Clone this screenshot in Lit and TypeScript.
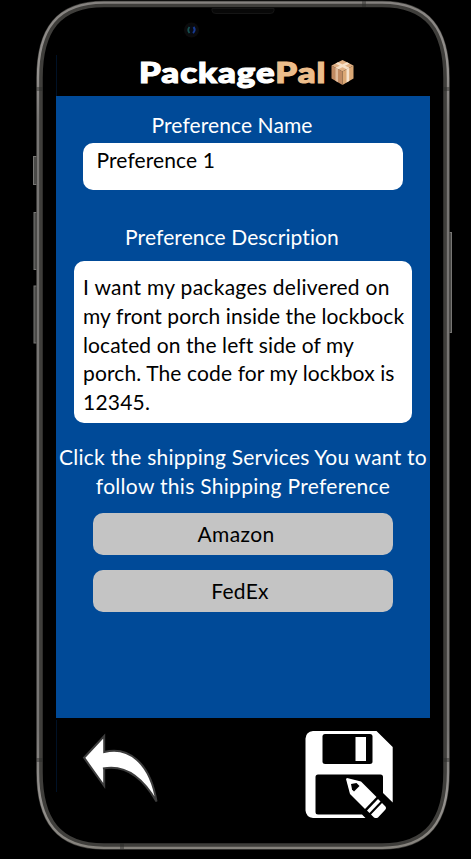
import { LitElement, html, svg, css } from "lit";
import { customElement, state } from "lit/decorators.js";
import { styleMap } from "lit/directives/style-map.js";

const FRAME =
  "M104 4 H382 C428 4 446.5 30 446.5 78 V772 C446.5 820 428 846.5 382 846.5 H104 C58 846.5 39.5 820 39.5 772 V78 C39.5 30 58 4 104 4 Z";

@customElement("phone-frame")
class PhoneFrame extends LitElement {
  static styles = css`
    :host { display: block; }
    svg { display: block; }
  `;
  render() {
    return html`<svg width="471" height="859" viewBox="0 0 471 859" fill="none">
      <defs>
        <linearGradient id="edge" x1="0" y1="0" x2="0" y2="1">
          <stop offset="0" stop-color="#85827f" />
          <stop offset=".08" stop-color="#969390" />
          <stop offset=".14" stop-color="#777573" />
          <stop offset=".86" stop-color="#777573" />
          <stop offset=".94" stop-color="#969390" />
          <stop offset="1" stop-color="#85827c" />
        </linearGradient>
      </defs>
      <g fill="#4a4a48" stroke="#777674">
        <rect x="33.5" y="156.500" width="4" height="28" />
        <rect x="34" y="212.500" width="4" height="57" />
        <rect x="34" y="286" width="4" height="57" />
        <rect x="448" y="232.500" width="3.500" height="100" />
      </g>
      <path d=${FRAME} stroke="#3f3e3b" stroke-width="6.500" />
      <path
        d="M104 2.700 H382 C429 2.700 448 29 448 78 V772 C448 821 429 847.800 382 847.800 H104 C57 847.800 38 821 38 772 V78 C38 29 57 2.700 104 2.700 Z"
        stroke="url(#edge)" stroke-width="2.300" />
      <g fill="#2b2b29" fill-opacity=".45">
        <rect x="36" y="87" width="7" height="4" /><rect x="443" y="87" width="7" height="4" />
        <rect x="36" y="758" width="7" height="4" /><rect x="443" y="758" width="7" height="4" />
        <rect x="362" y="1" width="4" height="6" /><rect x="120" y="843" width="4" height="6" />
      </g>
      <path d="M212 8.500 H274 V10.500 Q274 13.500 270 13.500 H216 Q212 13.500 212 10.500 Z" fill="#080808" stroke="#151515" />
      <circle cx="191.500" cy="30" r="7.500" fill="#0b0b0c" />
      <circle cx="191.500" cy="30" r="4.500" fill="#080b14" />
      <path d="M189.500 27 Q187 30 189.500 33" stroke="#17514f" stroke-width="1.800" />
      <path d="M193.500 27 Q196 30 193 33" stroke="#183a91" stroke-width="2" />
      <path d="M56.500 55 V96 M56.500 720 V792" stroke="#001126" />
    </svg>`;
  }
}

const parcel = svg`
  <path d="M1 6.500 L12 12.500 V26 L1 19.500 Z" fill="#c08a62"/>
  <path d="M12 12.500 L23 6.500 V19.500 L12 26 Z" fill="#dba875"/>
  <path d="M12 1 L23 6.500 L12 12.500 L1 6.500 Z" fill="#e0b084"/>
  <path d="M5 4.500 L7.500 3.200 L18.700 8.800 L16 10.300 Z M16.500 3.200 L19 4.500 L8 10.300 L5 8.800 Z" fill="#f6e0c8"/>
  <path d="M5 8.800 L7.500 10.100 V23.200 L5 21.800 Z" fill="#e0bb9b"/>
  <path d="M16 10.300 L18.700 8.800 V22 L16 23.600 Z" fill="#f6e2cc"/>`;

interface Line {
  text: string;
  /** Letter spacing in pixels. */
  track: number;
}

@customElement("app-root")
export class AppRoot extends LitElement {
  @state() private services: Line[] = [
    { text: "Amazon", track: 0.4 },
    { text: "FedEx", track: 0.3 },
  ];

  static styles = css`
    :host {
      display: block;
      position: relative;
      width: 471px;
      height: 859px;
      overflow: hidden;
      background: #000;
      font-family: Lato, "Noto Sans", sans-serif;
      font-size: 21px;
      line-height: 28.8px;
    }
    * { box-sizing: border-box; }
    phone-frame { position: absolute; inset: 0; }
    .screen {
      position: relative;
      display: flex;
      flex-direction: column;
      width: 374px;
      height: 859px;
      margin-left: 56px;
    }
    header {
      display: flex;
      flex: none;
      height: 96px;
      padding: 54px 0 0 83px;
      align-items: flex-start;
    }
    h1 {
      flex: none;
      margin: 0;
      width: 191px;
      font-size: 29px;
      line-height: 36px;
      font-weight: 900;
      letter-spacing: 0.85px;
      white-space: nowrap;
      color: #fff;
      -webkit-text-stroke: 1.2px currentColor;
      transform: scaleX(1.2);
      transform-origin: 0 0;
    }
    h1 span { color: #edbd8b; }
    .parcel { margin-top: 5px; width: 25px; height: 27px; }
    main {
      display: flex;
      flex: none;
      flex-direction: column;
      align-items: center;
      height: 622px;
      padding-top: 15px;
      background: #004a98;
      color: #fff;
    }
    .label { margin-right: 22px; white-space: nowrap; letter-spacing: 0.1px; }
    .name {
      width: 320px;
      height: 47.500px;
      margin: 3px 0 32.700px;
      padding: 3px 13.500px;
      border-radius: 10px;
      background: #fff;
      color: #000;
      letter-spacing: 0.1px;
    }
    .description {
      width: 338px;
      height: 162px;
      margin: 9px 0 20px;
      padding: 12.200px 9px;
      border-radius: 10px;
      background: #fff;
      color: #000;
    }
    .line { white-space: nowrap; }
    .prompt { text-align: center; margin-bottom: 13px; }
    .service {
      display: flex;
      justify-content: center;
      width: 300px;
      height: 42px;
      margin-bottom: 15px;
      padding: 7px 14px 0 0;
      border: 0;
      border-radius: 10px;
      background: #c4c4c4;
      color: #000;
      font: inherit;
    }
    .service + .service { padding-right: 6px; }
    footer {
      display: flex;
      justify-content: space-between;
      padding: 12px 36px 0 26px;
    }
    .back { margin-top: 3px; }
  `;

  private description: Line[] = [
    { text: "I want my packages delivered on", track: 0.28 },
    { text: "my front porch inside the lockbock", track: 0.08 },
    { text: "located on the left side of my", track: 0.1 },
    { text: "porch. The code for my lockbox is", track: 0.12 },
    { text: "12345.", track: 0.2 },
  ];

  private prompt: Line[] = [
    { text: "Click the shipping Services You want to", track: 0.23 },
    { text: "follow this Shipping Preference", track: 0.3 },
  ];

  private line(l: Line) {
    return html`<div class="line" style=${styleMap({ letterSpacing: `${l.track}px` })}>${l.text}</div>`;
  }

  render() {
    return html`
      <phone-frame></phone-frame>
      <div class="screen">
        <header>
          <h1>Package<span>Pal</span></h1>
          <svg class="parcel" viewBox="0 0 24 27">${parcel}</svg>
        </header>
        <main>
          <div class="label">Preference Name</div>
          <div class="name">Preference 1</div>
          <div class="label">Preference Description</div>
          <div class="description">${this.description.map((l) => this.line(l))}</div>
          <div class="prompt">${this.prompt.map((l) => this.line(l))}</div>
          ${this.services.map((s) => html`<button class="service">${this.line(s)}</button>`)}
        </main>
        <footer>
          <svg class="back" width="78" height="72" viewBox="82 733 78 72">
            <path
              d="M84 757.700 L104.200 736 V752 C128 746 150 762 156.500 801.500 C143 778 126 764 103 768.500 H104.200 V786 Z"
              fill="#fff" stroke="#3d3d3d" stroke-width="2" />
          </svg>
          <svg width="90" height="90" viewBox="304 730 90 90">
            <path
              d="M313 731 H376.500 L392.700 747 V802.500 L383 793 V777 Q383 774.500 380.500 774.500 H318 Q315.500 774.500 315.500 777 V812 Q315.500 814.500 318 814.500 H362 L365.500 818 H313 Q306 817 305.500 810.500 V738.500 Q306 731.500 313 731 Z"
              fill="#fff" />
            <rect x="322.500" y="734" width="50" height="30" rx="2.500" fill="#000" />
            <rect x="355.500" y="737" width="10.500" height="24" fill="#fff" />
            <path d="M347 778 L361 781.500 L376.500 797 L365 809 L350 794 L346 779 Z" fill="#fff" />
            <path d="M351 784 L356.500 783 L359.500 786 L354 791.500 L352 789.500 Z" fill="#000" />
            <path d="M378 799 L380.500 801.500 L369.500 813 L367 810.500 Z" fill="#fff" />
            <path d="M382 803 L385 806 Q387 808 385 810 L378 817.500 Q376 818.500 374 817.500 L371 814.500 Z" fill="#fff" />
          </svg>
        </footer>
      </div>
    `;
  }
}
